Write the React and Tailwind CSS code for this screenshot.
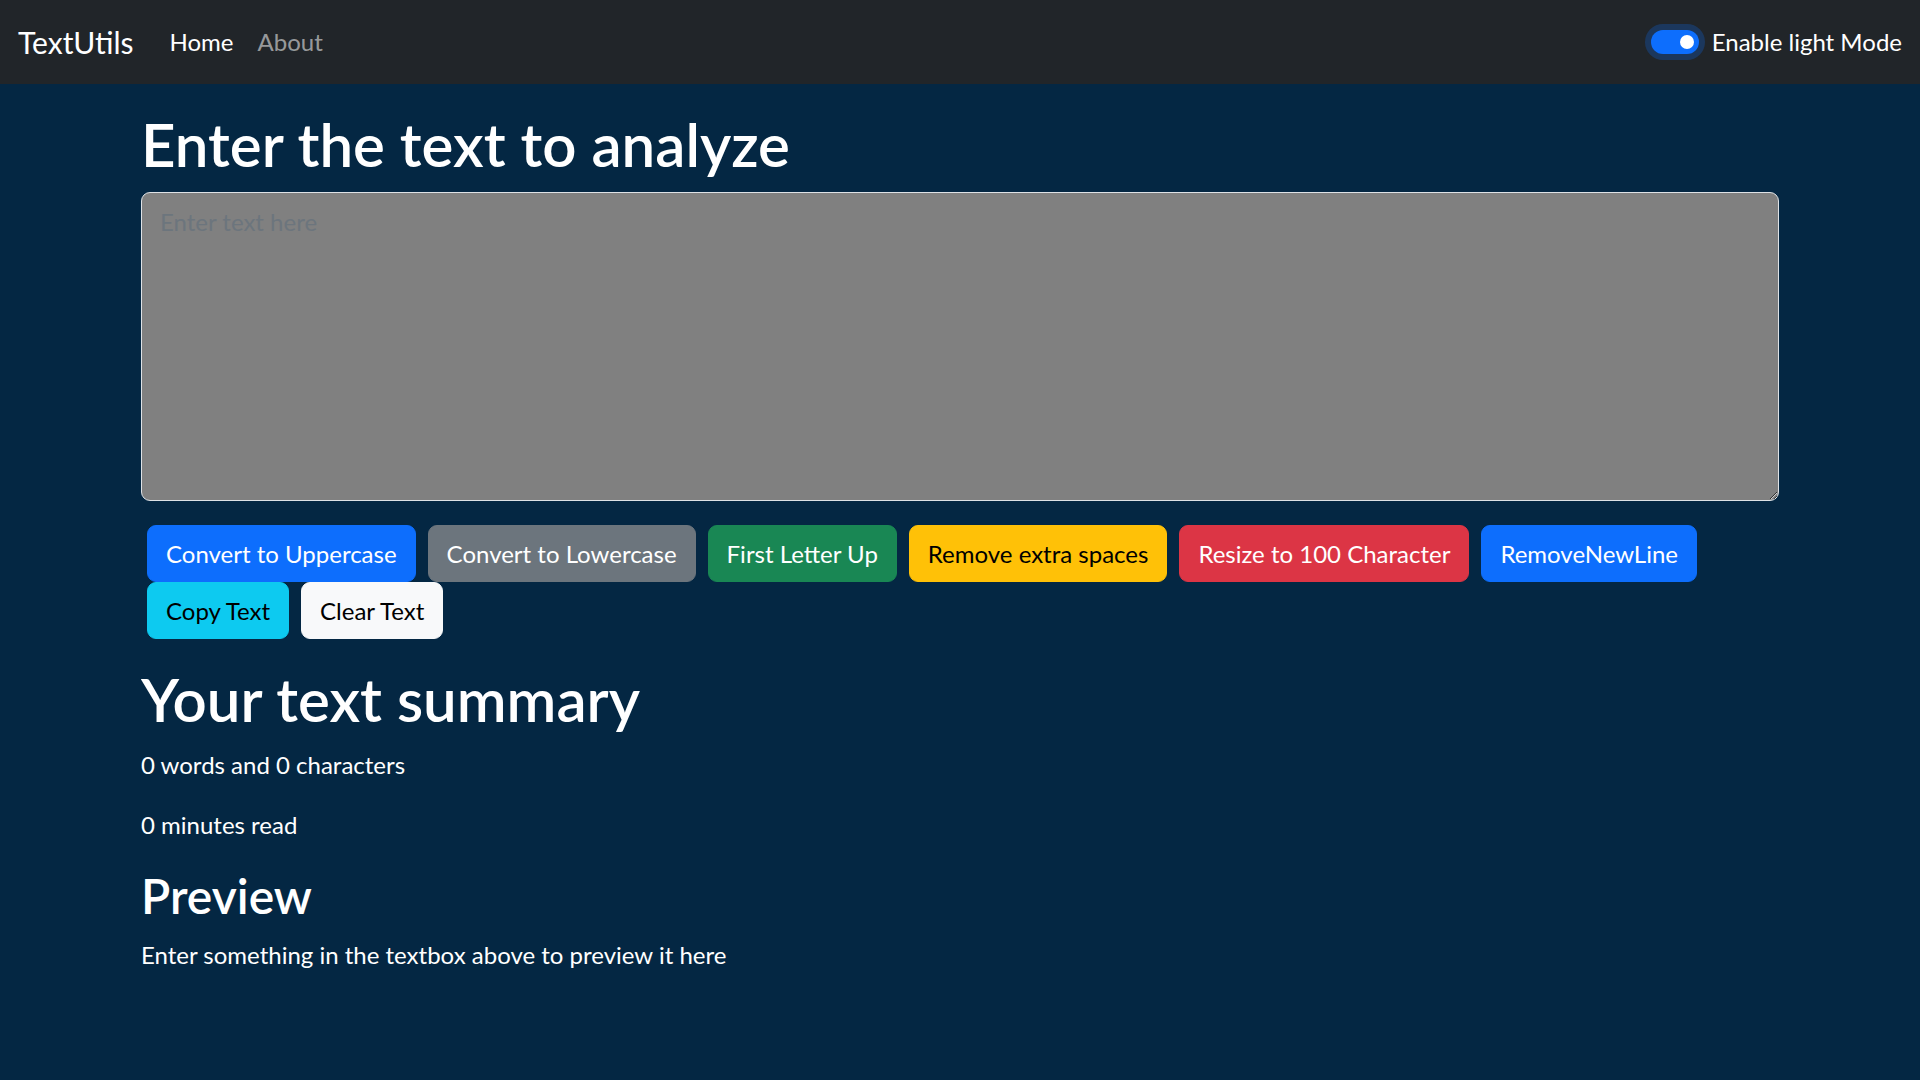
import React, { useState } from 'react';

const FONT = "font-['Lato','Noto_Sans',sans-serif]";

const buttons = [
  { label: 'Convert to Uppercase', cls: 'bg-[#0d6efd] border-[#0d6efd] text-white' },
  { label: 'Convert to Lowercase', cls: 'bg-[#6c757d] border-[#6c757d] text-white' },
  { label: 'First Letter Up', cls: 'bg-[#198754] border-[#198754] text-white' },
  { label: 'Remove extra spaces', cls: 'bg-[#ffc107] border-[#ffc107] text-black' },
  { label: 'Resize to 100 Character', cls: 'bg-[#dc3545] border-[#dc3545] text-white' },
  { label: 'RemoveNewLine', cls: 'bg-[#0d6efd] border-[#0d6efd] text-white' },
  { label: 'Copy Text', cls: 'bg-[#0dcaf0] border-[#0dcaf0] text-black' },
  { label: 'Clear Text', cls: 'bg-[#f8f9fa] border-[#f8f9fa] text-black' },
];

const Navbar = () => (
  <nav className="h-[84px] bg-[#212529] flex items-center justify-between px-[18px]">
    <div className="flex items-center">
      <span className="text-[30px] text-white mr-[24px] leading-[1.5]">TextUtils</span>
      <a className="text-[24px] text-white px-[12px]">Home</a>
      <a className="text-[24px] text-[rgba(255,255,255,0.55)] px-[12px]">About</a>
    </div>
    <div className="flex items-center text-[24px] text-white">
      <span className="relative w-[48px] h-[24px] rounded-full bg-[#0d6efd] shadow-[0_0_0_6px_rgba(13,110,253,0.25)] mr-[13px]">
        <span className="absolute right-[5px] top-[5px] w-[14px] h-[14px] rounded-full bg-white" />
      </span>
      <span>Enable light Mode</span>
    </div>
  </nav>
);

export default function App() {
  const [text, setText] = useState('');
  const words = text.split(/\s+/).filter((w) => w.length > 0).length;

  return (
    <div className={`min-h-[1080px] bg-[#042743] text-white ${FONT}`}>
      <Navbar />
      <div className="w-[1638px] ml-[141px] pt-[24px]">
        <h1 className="text-[60px] font-semibold leading-[1.2] mb-[12px]">Enter the text to analyze</h1>
        <textarea
          rows={8}
          value={text}
          onChange={(e) => setText(e.target.value)}
          placeholder="Enter text here"
          className="block w-full h-[309px] bg-[#808080] text-white text-[24px] leading-[1.5] px-[18px] pt-[11px] pb-[7px] border-[1.5px] border-[#dee2e6] rounded-[9px] placeholder:text-[#6c757d] mb-[24px]"
        />
        <div className="flex flex-wrap">
          {buttons.map((b) => (
            <button
              key={b.label}
              className={`mx-[6px] h-[57px] px-[18px] text-[24px] leading-[1.5] border-[1.5px] rounded-[9px] ${b.cls}`}
            >
              {b.label}
            </button>
          ))}
        </div>
      </div>
      <div className="w-[1638px] ml-[141px] mt-[24px]">
        <h1 className="text-[60px] font-semibold leading-[1.2] mb-[12px]">Your text summary</h1>
        <p className="text-[24px] leading-[1.5] mb-[24px]">{words} words and {text.length} characters</p>
        <p className="text-[24px] leading-[1.5] mb-[24px]">{0.008 * words} minutes read</p>
        <h2 className="text-[48px] font-semibold leading-[1.2] mb-[12px]">Preview</h2>
        <p className="text-[24px] leading-[1.5]">
          {text.length > 0 ? text : 'Enter something in the textbox above to preview it here'}
        </p>
      </div>
    </div>
  );
}
